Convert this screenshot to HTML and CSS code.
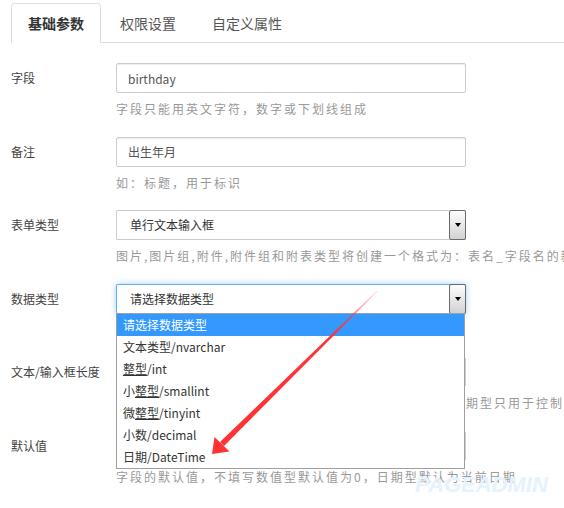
FILE: index.html
```html
<!DOCTYPE html>
<html lang="zh-CN">
<head>
    <meta charset="UTF-8">
    <meta name="viewport" content="width=device-width, initial-scale=1.0">
    <title>字段设置</title>
    <link rel="stylesheet" href="styles.css">
</head>
<body>
    <ul class="tabs">
        <li class="tab active">基础参数</li>
        <li class="tab">权限设置</li>
        <li class="tab">自定义属性</li>
    </ul>
    <form class="form">
        <div class="field">
            <label class="field-label" for="name">字段</label>
            <div class="field-control">
                <input class="input" type="text" id="name" value="birthday">
                <p class="help">字段只能用英文字符，数字或下划线组成</p>
            </div>
        </div>
        <div class="field">
            <label class="field-label" for="remark">备注</label>
            <div class="field-control">
                <input class="input" type="text" id="remark" value="出生年月">
                <p class="help">如：标题，用于标识</p>
            </div>
        </div>
        <div class="field">
            <label class="field-label">表单类型</label>
            <div class="field-control">
                <div class="select">
                    <span class="select-value">单行文本输入框</span>
                    <span class="select-arrow"></span>
                </div>
                <p class="help">图片,图片组,附件,附件组和附表类型将创建一个格式为：表名_字段名的新表</p>
            </div>
        </div>
        <div class="field">
            <label class="field-label">数据类型</label>
            <div class="field-control">
                <div class="select focus">
                    <span class="select-value">请选择数据类型</span>
                    <span class="select-arrow"></span>
                </div>
                <p class="help"></p>
                <ul class="dropdown">
                    <li class="selected">请选择数据类型</li>
                    <li>文本类型/nvarchar</li>
                    <li><span class="typo">整型</span>/int</li>
                    <li>小<span class="typo">整型</span>/smallint</li>
                    <li>微<span class="typo">整型</span>/tinyint</li>
                    <li>小数/decimal</li>
                    <li>日期/DateTime</li>
                </ul>
            </div>
        </div>
        <div class="field">
            <label class="field-label" for="length">文本/输入框长度</label>
            <div class="field-control">
                <input class="input" type="text" id="length" value="">
                <p class="help">设置文本框允许输入的最大字符串长度，对于数值型和日期型只用于控制显示宽度</p>
            </div>
        </div>
        <div class="field">
            <label class="field-label" for="default">默认值</label>
            <div class="field-control">
                <input class="input" type="text" id="default" value="">
                <p class="help">字段的默认值，不填写数值型默认值为0，日期型默认为当前日期</p>
            </div>
        </div>
    </form>
    <div class="watermark">PAGEADMIN</div>
    <svg class="pointer" width="564" height="508" viewBox="0 0 564 508">
        <defs>
            <linearGradient id="tail" gradientUnits="userSpaceOnUse" x1="377" y1="291" x2="335" y2="333">
                <stop offset="0" stop-color="#ff4a4a" stop-opacity="0.15"/>
                <stop offset="1" stop-color="#ff3333" stop-opacity="1"/>
            </linearGradient>
        </defs>
        <polygon points="377,290.5 377.8,291.3 224,446 220,442" fill="url(#tail)"/>
        <polygon points="212,454 214.5,437 229.5,451.5" fill="#ff3333"/>
    </svg>
</body>
</html>
```

FILE: styles.css
```css
html, body {
    margin: 0;
    height: 100%;
}
body {
    position: relative;
    overflow: hidden;
    background: #fff;
    color: #444;
    font-family: "Noto Sans CJK SC", "Noto Sans", sans-serif;
    font-size: 12px;
}
.tabs {
    display: flex;
    list-style: none;
    margin: 0 0 0 11px;
    padding: 3px 0 0;
    border-bottom: 1px solid #ddd;
}
.tab {
    margin: 0 2px -1px 0;
    padding: 0 16px;
    line-height: 38px;
    border: 1px solid transparent;
    border-radius: 4px 4px 0 0;
    font-size: 14px;
    color: #555;
}
.tab.active {
    border-color: #ddd #ddd transparent;
    background: #fff;
    color: #333;
    font-weight: bold;
}
.form {
    margin: 0;
    padding: 20px 0 0 11px;
}
.field {
    display: flex;
    margin-bottom: 18.6px;
}
.field-label {
    flex: none;
    width: 105px;
    line-height: 30px;
    color: #444;
}
.field-control {
    position: relative;
    width: 350px;
}
.input {
    display: block;
    box-sizing: border-box;
    width: 100%;
    height: 30px;
    margin: 0;
    padding: 0 11px;
    border: 1px solid #ccc;
    border-radius: 2px;
    box-shadow: inset 0 1px 1px rgba(0, 0, 0, 0.075);
    font-family: inherit;
    font-size: 12px;
    color: #555;
}
.help {
    height: 18px;
    margin: 7px 0 0;
    line-height: 18px;
    letter-spacing: 2px;
    white-space: nowrap;
    color: #999;
}
.select {
    display: flex;
    box-sizing: border-box;
    height: 30px;
    border: 1px solid #ccc;
    border-right: 0;
    border-radius: 2px 0 0 2px;
}
.select.focus {
    border-color: #66afe9;
    box-shadow: 0 0 6px rgba(102, 175, 233, 0.6);
}
.select-value {
    flex: 1;
    padding-left: 13px;
    line-height: 28px;
    color: #333;
}
.select-arrow {
    display: flex;
    align-items: center;
    justify-content: center;
    box-sizing: border-box;
    width: 17px;
    margin: -1px 0;
    border: 1px solid #6b6b6b;
    border-radius: 2px;
    background: linear-gradient(#fdfdfd, #d2d2d2);
}
.select-arrow::after {
    content: "";
    border-left: 3px solid transparent;
    border-right: 3px solid transparent;
    border-top: 4px solid #000;
}
.dropdown {
    position: absolute;
    top: 29px;
    left: 0;
    z-index: 2;
    box-sizing: border-box;
    width: 349px;
    margin: 0;
    padding: 0;
    list-style: none;
    border: 1px solid #a0a0a0;
    background: #fff;
}
.dropdown li {
    height: 22px;
    padding-left: 6px;
    line-height: 22px;
    color: #333;
}
.dropdown li.selected {
    background: #3399ff;
    color: #fff;
}
.typo {
    text-decoration: underline;
}
.watermark {
    position: absolute;
    left: 415px;
    top: 472px;
    font-family: "Liberation Sans", sans-serif;
    font-size: 22px;
    font-weight: bold;
    font-style: italic;
    color: #e6f2fc;
}
.pointer {
    position: absolute;
    top: 0;
    left: 0;
    z-index: 3;
    pointer-events: none;
}
```
